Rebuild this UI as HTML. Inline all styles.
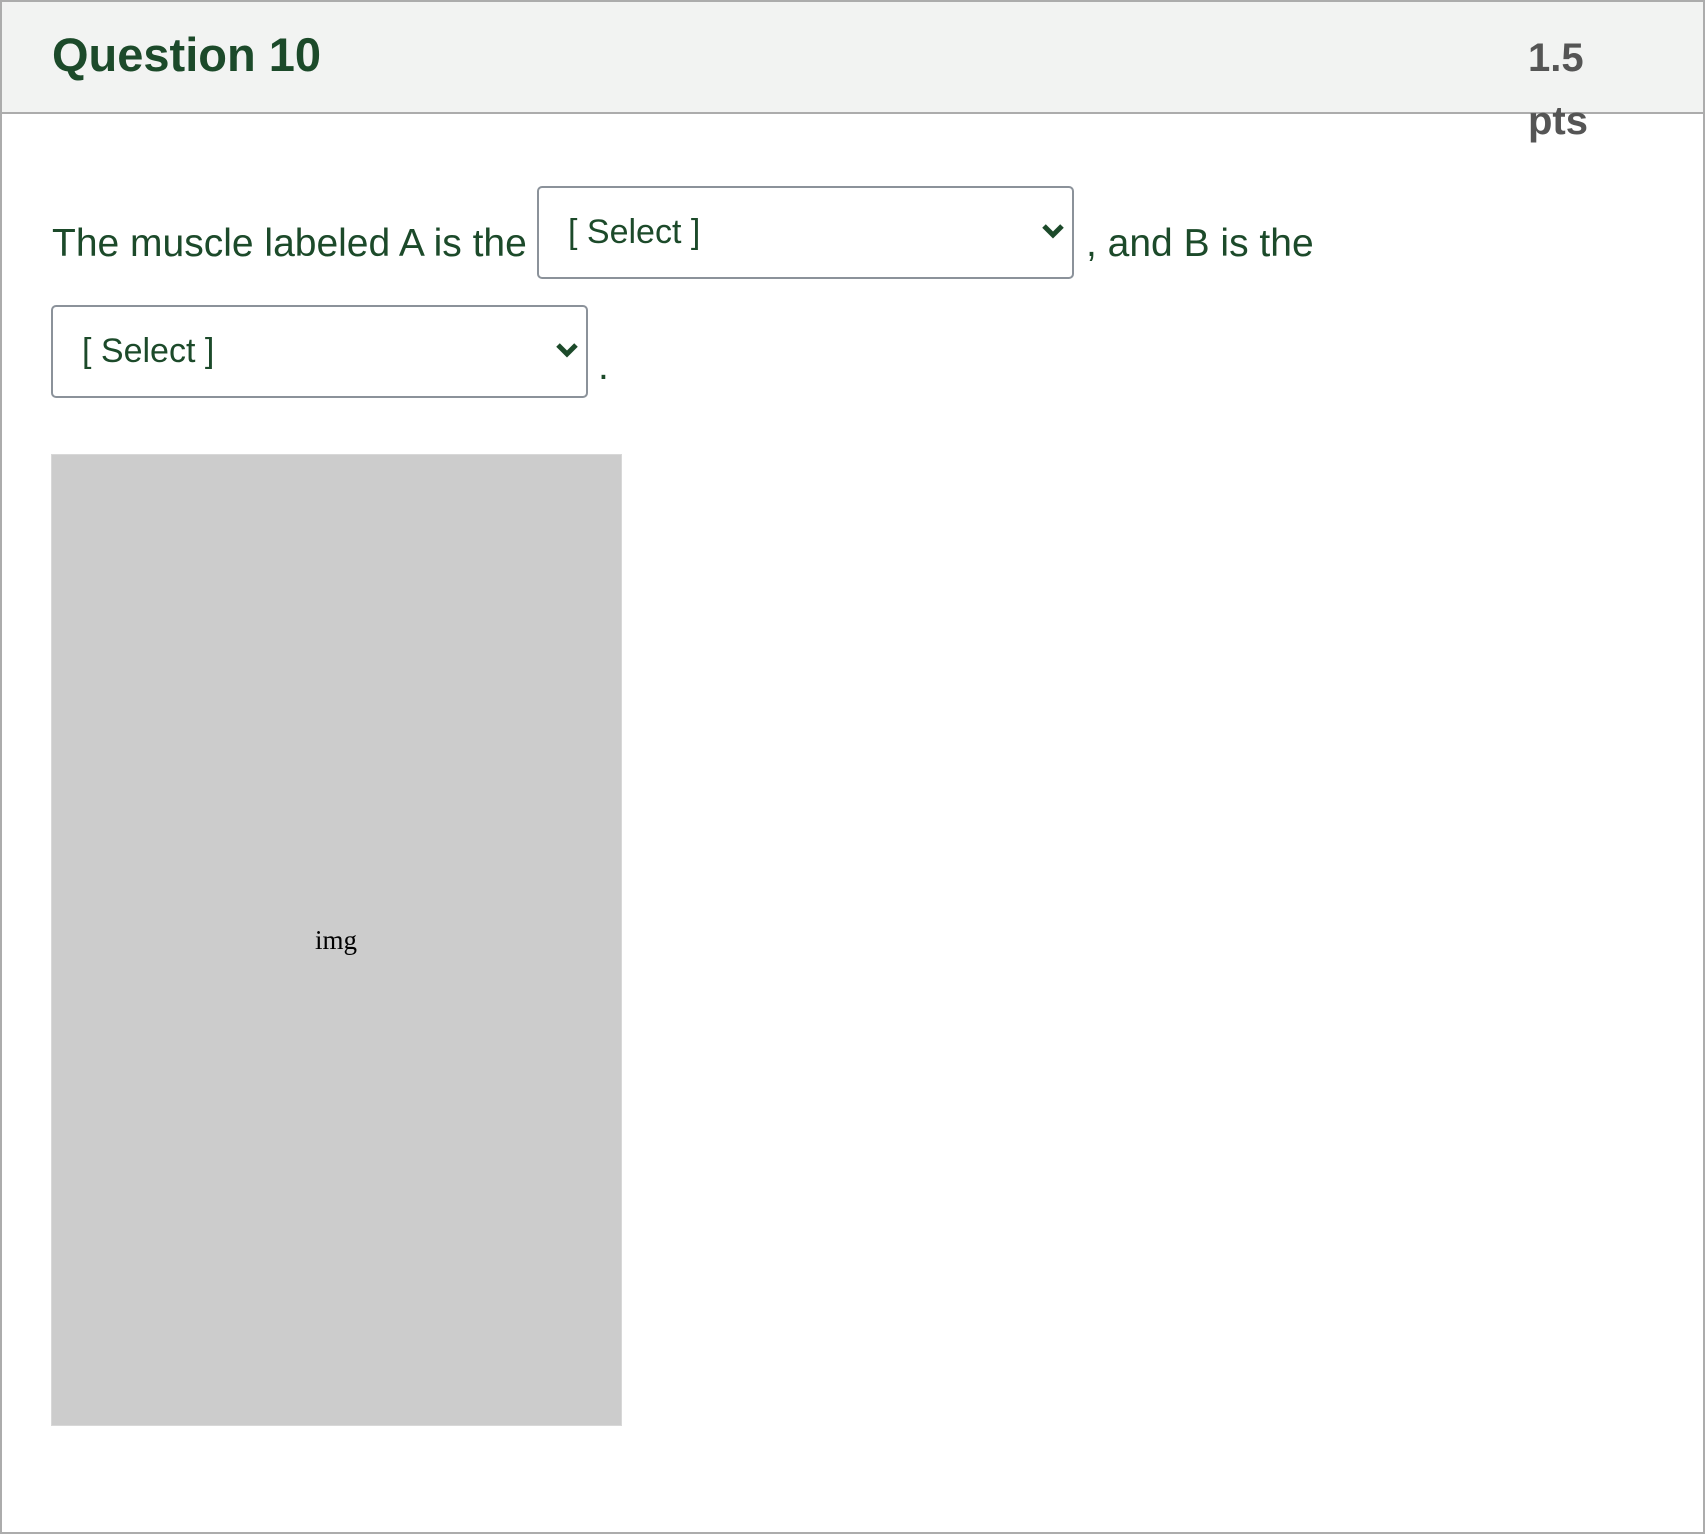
<!DOCTYPE html>
<html><head><meta charset="utf-8"><style>
html,body{margin:0;padding:0;width:1705px;height:1534px;background:#fff;overflow:hidden;font-family:"Liberation Sans",Arial,sans-serif}
.frame{position:absolute;left:0;top:0;width:1701px;height:1530px;border:2px solid #acacac;}
.hdr{position:absolute;left:2px;top:2px;width:1701px;height:110px;background:#f2f3f2;border-bottom:2px solid #acacac}
.t{position:absolute;white-space:nowrap}
.sel{position:absolute;border:2px solid #8b929a;border-radius:5px;background:#fff;box-sizing:border-box}
.sel span{position:absolute;left:29px;top:25px;font-size:34px;color:#1c4a2a}
.sel svg{position:absolute}
</style></head><body>
<div class="frame"></div>
<div class="hdr"></div>
<div class="t" style="left:52px;top:27px;font-size:47px;font-weight:bold;color:#1c4a2a">Question 10</div>
<div class="t" style="left:1528px;top:27px;font-size:40px;font-weight:bold;color:#555;line-height:63px">1.5<br>pts</div>
<div class="t" style="left:52px;top:222px;font-size:39px;color:#1c4a2a">The muscle labeled A is the</div>
<div class="sel" style="left:537px;top:186px;width:537px;height:93px"><span>[ Select ]</span>
<svg style="left:502px;top:35px" width="24" height="17" viewBox="0 0 24 17"><path d="M3 3 L12 12 L21 3" fill="none" stroke="#1c4a2a" stroke-width="5"/></svg></div>
<div class="t" style="left:1086px;top:222px;font-size:39px;color:#1c4a2a">, and B is the</div>
<div class="sel" style="left:51px;top:305px;width:537px;height:93px"><span>[ Select ]</span>
<svg style="left:502px;top:35px" width="24" height="17" viewBox="0 0 24 17"><path d="M3 3 L12 12 L21 3" fill="none" stroke="#1c4a2a" stroke-width="5"/></svg></div>
<div class="t" style="left:598px;top:345px;font-size:39px;color:#1c4a2a">.</div>
<div style="position:absolute;left:51px;top:454px;width:571px;height:972px;background:#cccccc;border:1px solid #d8d8d8;box-sizing:border-box"></div>
<div class="t" style="left:315px;top:925px;font-family:'Liberation Serif',serif;font-size:27px;color:#000">img</div>
</body></html>
